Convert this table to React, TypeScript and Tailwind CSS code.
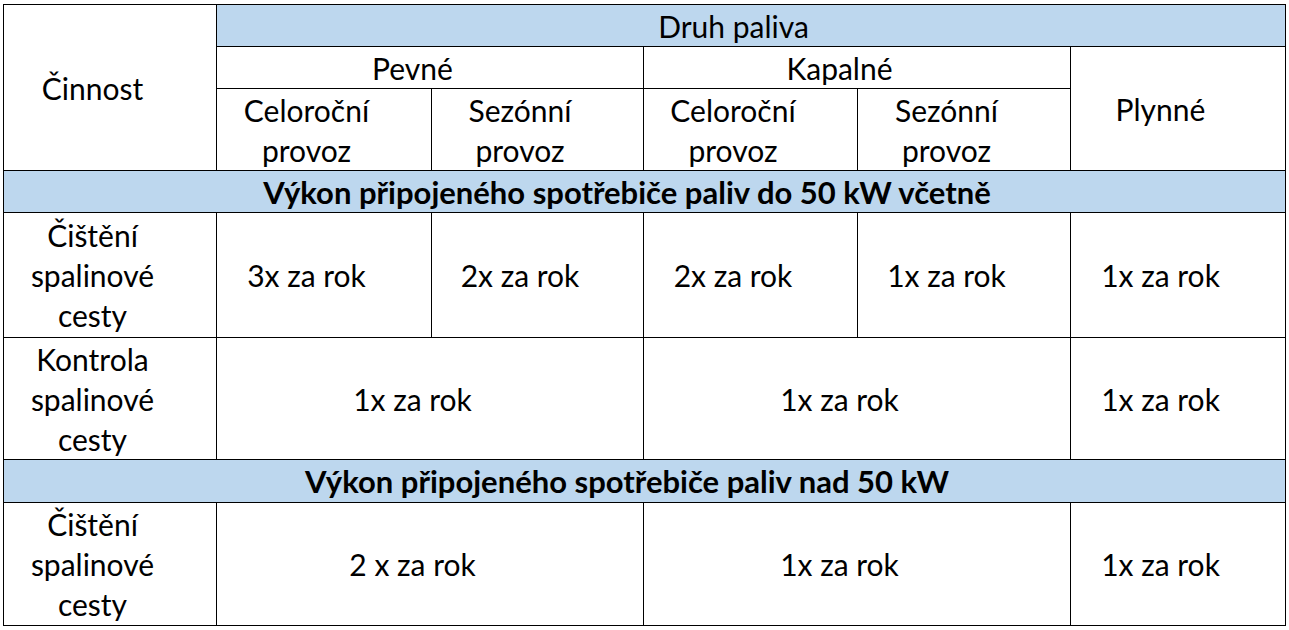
import React from "react";

const cell = "border border-black text-center align-middle pl-[2px] pr-[37px] leading-[40px]";
const blue = "bg-[#bdd7ee]";

export default function App() {
  return (
    <div className="w-[1289px] h-[630px] bg-white pt-[4px] pl-[3px]" style={{ fontFamily: "Lato, 'Open Sans', sans-serif" }}>
      <table className="table-fixed border-collapse w-[1282px] text-[30px] text-black">
        <colgroup>
          <col className="w-[213px]" />
          <col className="w-[215px]" />
          <col className="w-[212px]" />
          <col className="w-[214px]" />
          <col className="w-[213px]" />
          <col className="w-[215px]" />
        </colgroup>
        <tbody>
          <tr className="h-[42px]">
            <td rowSpan={3} className={cell}>Činnost</td>
            <td colSpan={5} className={`${cell} ${blue}`}>Druh paliva</td>
          </tr>
          <tr className="h-[42px]">
            <td colSpan={2} className={cell}>Pevné</td>
            <td colSpan={2} className={cell}>Kapalné</td>
            <td rowSpan={2} className={cell}>Plynné</td>
          </tr>
          <tr className="h-[82px]">
            <td className={cell}>Celoroční<br />provoz</td>
            <td className={cell}>Sezónní<br />provoz</td>
            <td className={cell}>Celoroční<br />provoz</td>
            <td className={cell}>Sezónní<br />provoz</td>
          </tr>
          <tr className="h-[42px]">
            <td colSpan={6} className={`${cell} ${blue} font-bold text-[31px]`}>Výkon připojeného spotřebiče paliv do 50 kW včetně</td>
          </tr>
          <tr className="h-[125px]">
            <td className={cell}>Čištění<br />spalinové<br />cesty</td>
            <td className={cell}>3x za rok</td>
            <td className={cell}>2x za rok</td>
            <td className={cell}>2x za rok</td>
            <td className={cell}>1x za rok</td>
            <td className={cell}>1x za rok</td>
          </tr>
          <tr className="h-[122px]">
            <td className={cell}>Kontrola<br />spalinové<br />cesty</td>
            <td colSpan={2} className={cell}>1x za rok</td>
            <td colSpan={2} className={cell}>1x za rok</td>
            <td className={cell}>1x za rok</td>
          </tr>
          <tr className="h-[43px]">
            <td colSpan={6} className={`${cell} ${blue} font-bold text-[31px]`}>Výkon připojeného spotřebiče paliv nad 50 kW</td>
          </tr>
          <tr className="h-[123px]">
            <td className={cell}>Čištění<br />spalinové<br />cesty</td>
            <td colSpan={2} className={cell}>2 x za rok</td>
            <td colSpan={2} className={cell}>1x za rok</td>
            <td className={cell}>1x za rok</td>
          </tr>
        </tbody>
      </table>
    </div>
  );
}
